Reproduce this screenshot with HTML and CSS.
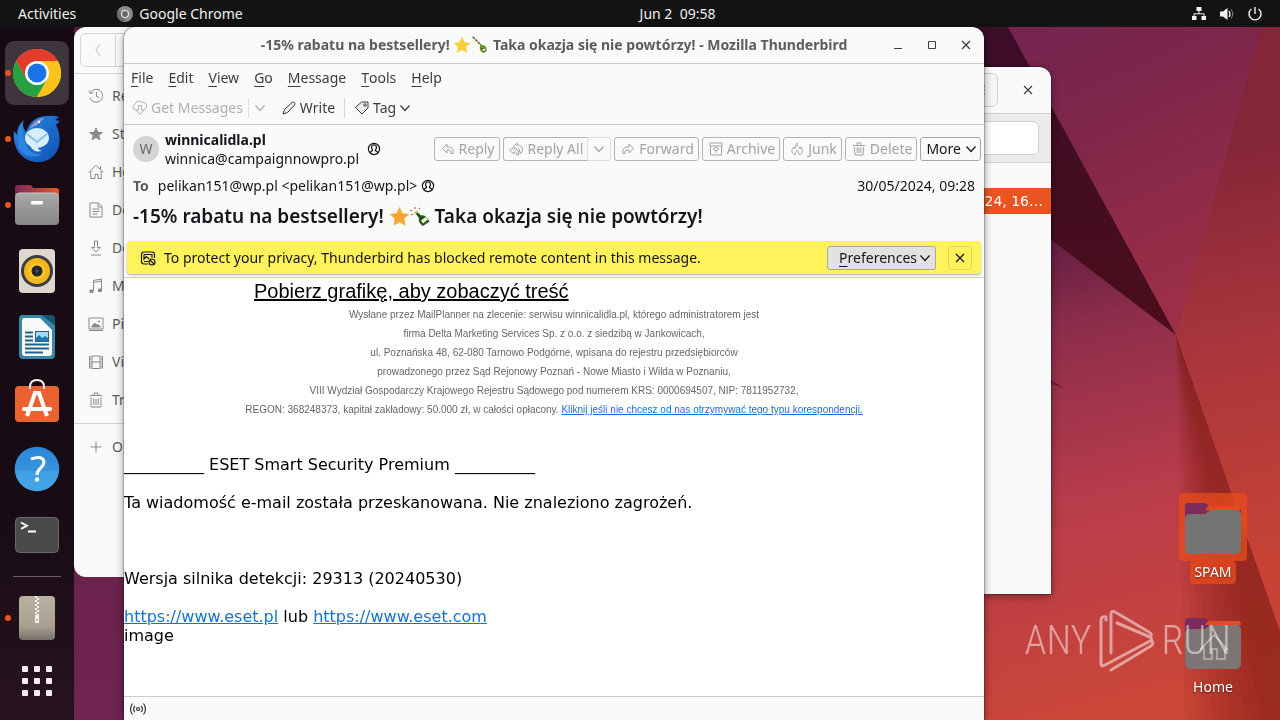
FILE: index.html
```html
<!DOCTYPE html>
<html lang="en">
<head>
<meta charset="utf-8">
<title>Desktop</title>
<link rel="stylesheet" href="styles.css">
</head>
<body>
<svg width="0" height="0" class="defs" aria-hidden="true">
  <defs>
    <symbol id="chev" viewBox="0 0 12 12"><path d="M1.500 3.500 6 8.500l4.500-5" fill="none" stroke="currentColor" stroke-width="1.200"/></symbol>
    <symbol id="close" viewBox="0 0 12 12"><path d="M2 2l8 8M10 2l-8 8" fill="none" stroke="currentColor" stroke-width="1.200"/></symbol>
    <symbol id="contact" viewBox="0 0 14 14"><g fill="none" stroke="currentColor" stroke-width="1.200"><circle cx="7" cy="7" r="5.600"/><path d="M3.200 11c0-1.500 1-2 2.300-2.400V7.800C4 6.500 4 2.900 7 2.900s3 3.600 1.500 4.900v.8c1.300.4 2.300.9 2.300 2.400"/></g></symbol>
    <symbol id="star" viewBox="0 0 20 20"><path d="M10 .8l2.800 6.100 6.600.8-4.900 4.500 1.300 6.600L10 15.500l-5.800 3.300 1.300-6.600L.6 7.700l6.600-.8z" fill="currentColor"/></symbol>
    <symbol id="bottle" viewBox="0 0 20 20"><path d="M5 6l2-1.500 4 4c4-1 7 3 8.500 6L13 19c-3-2-5-5-4-8z" fill="#23561f"/><path d="M4 5.500l2.500-2 1.500 1.800-2.500 2z" fill="#d9b64c"/><path d="M11 13.500l5-3.800 2 2.800-5 4z" fill="#f2edc4"/><path d="M0 3l2 1M5 0v2M1 8l2-1M9 2l1-1" stroke="#967a42" stroke-width="1.200"/></symbol>
    <symbol id="bottle-old" viewBox="0 0 20 20"><path d="M2 1l9 9" stroke="#77702f" stroke-width="2" stroke-dasharray="3 1"/><path d="M10 8l2 2c5 0 6 4 5 7l-3 2c-3-1-5-4-4-7z" fill="#6c9c1c"/><path d="M13 13l4 3-3 2-3-4z" fill="#394f18"/><path d="M12 15l3-1 1 2-2 1z" fill="#f3f2cf"/></symbol>
    <linearGradient id="folderTab"><stop offset="0" stop-color="#7a2a5c"/><stop offset="1" stop-color="#e6552b"/></linearGradient>
    <linearGradient id="folderGrey" x2="0" y2="1"><stop offset="0" stop-color="#a9a9a7"/><stop offset="1" stop-color="#858583"/></linearGradient>
    <linearGradient id="blue" x2="0" y2="1"><stop offset="0" stop-color="#2787d7"/><stop offset=".54" stop-color="#3b93dc"/><stop offset=".55" stop-color="#3f9fe4"/><stop offset="1" stop-color="#45a6e6"/></linearGradient>
    <linearGradient id="bird" x2="1" y2="1"><stop offset="0" stop-color="#2a8be6"/><stop offset="1" stop-color="#1150b4"/></linearGradient>
    <linearGradient id="zip" x2="0" y2="1"><stop offset="0" stop-color="#b9b2a2"/><stop offset=".7" stop-color="#a89f8f"/><stop offset="1" stop-color="#75706a"/></linearGradient>
  </defs>
</svg>

<svg class="wallpaper" viewBox="0 0 1280 720" preserveAspectRatio="none" aria-hidden="true">
  <defs>
    <linearGradient id="w1" gradientUnits="userSpaceOnUse" x1="1000" y1="240" x2="1120" y2="720"><stop offset="0" stop-color="#5d1c40"/><stop offset=".2" stop-color="#8c2d4b"/><stop offset=".55" stop-color="#b83c4b"/><stop offset="1" stop-color="#cc4737"/></linearGradient>
    <linearGradient id="w2" x2="0" y2="1"><stop offset="0" stop-color="#3c0d28"/><stop offset="1" stop-color="#4b0e1b"/></linearGradient>
    <linearGradient id="w3" x2=".4" y2="1"><stop offset="0" stop-color="#732550"/><stop offset=".4" stop-color="#7f2649"/><stop offset="1" stop-color="#9c2f47"/></linearGradient>
    <linearGradient id="w4" gradientUnits="userSpaceOnUse" x1="1200" y1="150" x2="1290" y2="560"><stop offset="0" stop-color="#842638"/><stop offset=".45" stop-color="#a8353c"/><stop offset="1" stop-color="#c74335"/></linearGradient>
    <linearGradient id="w6" x2="0" y2="1"><stop offset="0" stop-color="#581b3e"/><stop offset="1" stop-color="#702450"/></linearGradient>
  </defs>
  <rect width="1280" height="720" fill="url(#w1)"/>
  <rect y="27" width="600" height="693" fill="url(#w6)"/>
  <g fill="#851d1a" fill-opacity=".09">
    <path d="M1176 335 1185 720H1311z"/><path d="M1176 335 1195 720H1311z"/><path d="M1176 335 1204 720H1311z"/><path d="M1176 335 1213 720H1311z"/><path d="M1176 335 1222 720H1311z"/><path d="M1176 335 1230 720H1311z"/><path d="M1176 335 1238 720H1311z"/><path d="M1176 335 1246 720H1311z"/><path d="M1176 335 1254 720H1311z"/><path d="M1176 335 1262 720H1311z"/><path d="M1176 335 1270 720H1311z"/>
  </g>
  <path d="M900 27h110l166 308-276-211z" fill="url(#w2)"/>
  <path d="M1008 27h255l-87 308z" fill="url(#w3)"/>
  <path d="M1263 27h17v604L1176 335z" fill="url(#w4)"/>
  <path d="M1051 380l13 8-13-4z" fill="#6f1d3c"/>
</svg>

<header class="topbar">
  <div class="top-left">
    <button class="top-btn">Activities</button>
    <button class="top-btn app">
      <svg width="16" height="16" viewBox="0 0 16 16"><circle cx="8" cy="8" r="8" fill="#8b8b8b"/><path d="M8 8 1 4a8 8 0 0 0 6 12z" fill="#6c6c6c"/><circle cx="8" cy="8" r="4" fill="#e8e8e8"/><circle cx="8" cy="8" r="2.900" fill="#666"/></svg>
      Google Chrome
    </button>
  </div>
  <button class="top-btn">Jun 2&nbsp; 09:58</button>
  <div class="top-right">
    <svg width="16" height="16" viewBox="0 0 16 16" fill="#f2f2f2"><path d="M5.500 1h5v4h-5zM1 10h4.500v4H1zM10.500 10H15v4h-4.500z"/><path d="M8 5v3M3 10V7.800h10V10" fill="none" stroke="#f2f2f2"/></svg>
    <svg width="16" height="16" viewBox="0 0 16 16"><path d="M1 5.500h3L8.500 2v12L4 10.500H1z" fill="#f2f2f2"/><path d="M10 5q2 3 0 6" fill="none" stroke="#f2f2f2" stroke-width="1.300"/><path d="M12 3.500q3.500 4.500 0 9" fill="none" stroke="#777" stroke-width="1.200"/></svg>
    <svg width="16" height="16" viewBox="0 0 16 16" fill="none" stroke="#f2f2f2" stroke-width="1.400"><path d="M4.500 3a6 6 0 1 0 7 0M8 1v7"/></svg>
  </div>
</header>

<div class="workspace">
  <nav class="dock" aria-label="Dock">
    <button class="dock-item running active" aria-label="Google Chrome">
      <svg width="48" height="48" viewBox="0 0 48 48"><circle cx="24" cy="24" r="24" fill="#fbbf16"/><path d="M24 24H44.800A24 24 0 0 0 3.200 12L13.600 30z" fill="#e33b2e"/><path d="M44.800 12A24 24 0 0 0 3.200 12L24 12z" fill="#e33b2e"/><path d="M3.200 12A24 24 0 0 0 24 48l10.400-18H24l-10.400 0z" fill="#25a144"/><path d="M24 48A24 24 0 0 0 44.800 12H24v12l10.400 6z" fill="#fcc31b"/><circle cx="24" cy="24" r="12" fill="#fff"/><circle cx="24" cy="24" r="9.500" fill="#1a73e8"/></svg>
    </button>
    <button class="dock-item running" aria-label="Thunderbird">
      <svg width="48" height="48" viewBox="0 0 48 48"><path d="M13 17C17 6 24 1 34 1q7-1 12 1l-4 3 5 1-4 4c9 17 1 37-18 37C10 47-1 34 1 16l3 4C4 13 7 8 11 5c-2 4-1 8 2 12z" fill="url(#bird)"/><path d="M10 8c-3 10 0 12 2 19 2 9 10 14 18 11-8 7-20 3-24-5-3-8 0-18 4-25z" fill="#2f86df"/><path d="M17 14c2-5 7-10 14-11l-5 5c-2 3-6 3-9 6z" fill="#a59bd4"/><ellipse cx="24" cy="23" rx="12" ry="10" fill="#d8eefa"/><path d="M14 19l10 8 10-8" fill="none" stroke="#8ebfe6" stroke-width="2"/><path d="M17 31c4 6 7 6 12 5-3-1-4-2-4-4z" fill="#d8eefa"/><circle cx="26" cy="7" r="1.200" fill="#fff"/></svg>
    </button>
    <button class="dock-item running" aria-label="Files">
      <svg width="48" height="48" viewBox="0 0 48 48"><path d="M2 7q0-3 3-3h12q2 0 3 3h23q3 0 3 3v12H2z" fill="url(#folderTab)"/><rect x="2" y="12" width="44" height="32" rx="4" fill="url(#folderGrey)"/><path d="M3 14q1-2 4-2h34q3 0 4 2" fill="none" stroke="#c7c7c5"/><rect x="18" y="20" width="12" height="3.500" rx="1" fill="#fff"/></svg>
    </button>
    <button class="dock-item" aria-label="Rhythmbox">
      <svg width="48" height="48" viewBox="0 0 48 48"><rect x="6" y="2" width="36" height="44" rx="4" fill="#ddd7cd"/><circle cx="24" cy="24" r="16" fill="#3c3d40"/><circle cx="24" cy="24" r="13" fill="#f4b71b"/><circle cx="24" cy="24" r="8" fill="#f9c92e"/><circle cx="24" cy="24" r="5.500" fill="#242526"/><circle cx="24" cy="24" r="1.800" fill="#424b4f"/></svg>
    </button>
    <button class="dock-item" aria-label="LibreOffice Writer">
      <svg width="48" height="48" viewBox="0 0 48 48"><path d="M9 2h20l13 10v30q0 4-4 4H10q-4 0-4-4V6q0-4 3-4z" fill="#3987a8"/><path d="M29 2h9q4 0 4 4v6z" fill="#1b5270"/><path d="M11 5h16l12 12v23q0 3-3 3H12q-3 0-3-3V8q0-3 2-3z" fill="#f8fafa"/><path d="M12 19.500h8M12 23.500h8M12 27.500h8M12 31.500h24M12 35.500h24M12 39.500h18" stroke="#246283" stroke-width="2"/><rect x="22.500" y="18.500" width="13" height="10" fill="#a8daf6" stroke="#246283"/><path d="M23 28v-3l3-3 3 3 3-2 3 2v3z" fill="#1c79b1"/></svg>
    </button>
    <button class="dock-item" aria-label="Ubuntu Software">
      <svg width="48" height="48" viewBox="0 0 48 48"><rect x="2" y="7" width="44" height="36" rx="4" fill="#ea6132"/><path d="M17 10V8q0-7 7-7t7 7v2" fill="none" stroke="#f4eee6" stroke-width="2"/><path d="M14 37 22 14h4l8 23" fill="none" stroke="#fff" stroke-width="4"/><path d="M11 30h26" stroke="#fff" stroke-width="4" stroke-linecap="round"/></svg>
    </button>
    <button class="dock-item" aria-label="Help">
      <svg width="48" height="48" viewBox="0 0 48 48"><circle cx="24" cy="24" r="22.300" fill="url(#blue)"/><path d="M18 14q12-4 13 3c0 6-7 6-7 13" fill="none" stroke="#fff" stroke-width="3"/><circle cx="24" cy="34.500" r="2.200" fill="#fff"/></svg>
    </button>
    <button class="dock-item" aria-label="Terminal">
      <svg width="48" height="48" viewBox="0 0 48 48"><rect x="2.500" y="6.500" width="43" height="35" rx="4" fill="#4a4a4a" stroke="#686868"/><path d="M8 11.500l6 3.200-6 3.200M15 20.500h8" fill="none" stroke="#fff" stroke-width="1.800"/></svg>
    </button>
    <hr class="dock-sep">
    <button class="dock-item running" aria-label="Archive Manager">
      <svg width="48" height="48" viewBox="0 0 48 48"><rect x="6" y="2" width="36" height="44" rx="4" fill="url(#zip)"/><path d="M23 2v20" stroke="#f6f2ea" stroke-width="2" stroke-dasharray="2 2"/><path d="M25 4v18" stroke="#f6f2ea" stroke-width="2" stroke-dasharray="2 2"/><path d="M22 21h4v8h-4z" fill="#f4f1ec"/><path d="M23.500 25h1v2h-1z" fill="#777"/></svg>
    </button>
    <button class="dock-item apps" aria-label="Show Applications">
      <svg width="32" height="32" viewBox="0 0 32 32" fill="#f7eef4"><rect x="1" y="1" width="6" height="6" rx="1"/><rect x="13" y="1" width="6" height="6" rx="1"/><rect x="25" y="1" width="6" height="6" rx="1"/><rect x="1" y="13" width="6" height="6" rx="1"/><rect x="13" y="13" width="6" height="6" rx="1"/><rect x="25" y="13" width="6" height="6" rx="1"/><rect x="1" y="25" width="6" height="6" rx="1"/><rect x="13" y="25" width="6" height="6" rx="1"/><rect x="25" y="25" width="6" height="6" rx="1"/></svg>
    </button>
  </nav>

  <main class="desktop">
    <div class="desk-icons">
      <div class="desk-icon selected">
        <div class="desk-pic"><svg width="64" height="64" viewBox="0 0 64 64"><path d="M4 11q0-3 3-3h16q3 0 5 4h29q3 0 3 3v12H4z" fill="#7d2b5b"/><path d="M27 11h30q3 0 3 4H24z" fill="#e34b28"/><path d="M4 24q0-5 5-5h15l5-4h26q5 0 5 5v33q0 6-6 6H10q-6 0-6-6z" fill="#747472"/></svg></div>
        <span>SPAM</span>
      </div>
      <div class="desk-icon">
        <div class="desk-pic"><svg width="64" height="64" viewBox="0 0 64 64"><path d="M4 11q0-3 3-3h16q3 0 5 4h29q3 0 3 3v12H4z" fill="#7d2b5b"/><path d="M27 11h30q3 0 3 4H24z" fill="#e34b28"/><path d="M4 24q0-5 5-5h15l5-4h26q5 0 5 5v33q0 6-6 6H10q-6 0-6-6z" fill="#7c7573"/><path d="M19 40l14-15 14 15M23 37v12h8V39h5v10h8V37" fill="none" stroke="#bcb6b3" stroke-width="1.500"/></svg></div>
        <span>Home</span>
      </div>
    </div>

    <section class="window files" aria-label="Files">
      <div class="files-head"><div class="nav-pair"><button class="back" aria-label="Back"><svg width="12" height="16" viewBox="0 0 12 16"><path d="M8 2 4 8l4 6" fill="none" stroke="#cfcfcf" stroke-width="1.300"/></svg></button><button class="forward" aria-label="Forward"></button></div></div>
      <ul class="places">
        <li><svg viewBox="0 0 16 16"><path d="M2.500 4.500A6.500 6.500 0 1 1 2 10M1 2.500l1.300 3 3-.8M8.500 4v4.500l2.500 1"/></svg>Re</li>
        <li><svg viewBox="0 0 16 16"><path fill="#888" d="M8 2l1.700 4.300 4.600.2-3.600 2.900 1.300 4.400L8 11.300l-4 2.500 1.300-4.400-3.600-2.900 4.600-.2z"/></svg>St</li>
        <li><svg viewBox="0 0 16 16"><path d="M.8 8.500 8 1.300l7.200 7.200M2.800 7v7.500H7v-4h3v4h3.200V7M12.500 2v3"/></svg>Ho</li>
        <li><svg viewBox="0 0 16 16"><path d="M2 1h8.500L14 4.500V15H2zM10 1v4h4M4.500 7h7M4.500 9.500h7M4.500 12h5"/></svg>Do</li>
        <li><svg viewBox="0 0 16 16"><path d="M6.500 1h3v6.500h3L8 12 3.500 7.500h3zM3 15h10"/></svg>Do</li>
        <li><svg viewBox="0 0 16 16"><path d="M5.500 12.500V2.500l8-1.500v10.500M5.500 4.500l8-1.500"/><path fill="#888" d="M2 12h3v2.500H2zM10.500 11h3v2.500h-3z"/></svg>M</li>
        <li><svg viewBox="0 0 16 16"><path d="M1 2h14v11H1zM1 14.500h14"/><path fill="#888" d="M3.500 11 6.500 7l2 2 1-1 3 3zM10.500 5h1v1h-1z"/></svg>Pi</li>
        <li><svg viewBox="0 0 16 16"><path d="M4 2h8v12.500H4zM4 8h8M1.500 2v12.500M14.500 2v12.500"/><path d="M2.800 2v13M13.200 2v13" stroke-dasharray="1.500 1"/></svg>Vi</li>
        <li><svg viewBox="0 0 16 16"><path d="M2 3.500h12M6 3V1h4v2M3 5.500V15h10V5.500M5.800 6.500V13M8 6.500V13M10.200 6.500V13"/></svg>Tr</li>
        <li class="other"><svg viewBox="0 0 16 16"><path d="M8 2.500v11M2.500 8h11"/></svg>O</li>
      </ul>
    </section>

    <section class="window archive" aria-label="Archive">
      <div class="arc-head">
        <button class="arc-menu" aria-label="Menu"><svg width="10" height="14" viewBox="0 0 10 14"><path d="M1 3h8M1 7h8M1 11h8" stroke="#777"/></svg></button>
        <button class="plain" aria-label="Close"><svg width="12" height="12"><use href="#close"/></svg></button>
      </div>
      <div class="arc-bar"><input type="text" aria-label="Location"></div>
      <div class="arc-row">24, 16…</div>
    </section>

    <section class="window mail" aria-label="Mozilla Thunderbird">
      <div class="titlebar">
        <h1>-15% rabatu na bestsellery! <svg class="emoji gold" width="18" height="18"><use href="#star"/></svg><svg class="emoji" width="18" height="18"><use href="#bottle-old"/></svg> Taka okazja się nie powtórzy! - Mozilla Thunderbird</h1>
        <div class="win-btns">
          <button class="plain" aria-label="Minimize"><svg width="12" height="12" viewBox="0 0 12 12"><path d="M2 9.500h8" stroke="currentColor"/></svg></button>
          <button class="plain" aria-label="Maximize"><svg width="12" height="12" viewBox="0 0 12 12"><path d="M2.500 2.500h7v7h-7z" fill="none" stroke="currentColor"/></svg></button>
          <button class="plain" aria-label="Close"><svg width="12" height="12"><use href="#close"/></svg></button>
        </div>
      </div>
      <div class="menubar">
        <button><u>F</u>ile</button><button><u>E</u>dit</button><button><u>V</u>iew</button><button><u>G</u>o</button><button><u>M</u>essage</button><button><u>T</u>ools</button><button><u>H</u>elp</button>
      </div>
      <div class="toolbar">
        <button class="get" disabled><svg width="16" height="16" viewBox="0 0 16 16"><path d="M4.500 10H4a3 3 0 0 1-1-5.800A4 4 0 0 1 10 2.500a3.500 3.500 0 0 1 4.500 3.500c0 2-1 3.500-3 4M6.500 5.500h3V10H12l-4 4.500L4 10h2.500z" fill="none" stroke="currentColor"/></svg>Get Messages</button>
        <button class="drop" disabled aria-label="Get messages options"><svg width="12" height="12"><use href="#chev"/></svg></button>
        <button class="write"><svg width="16" height="16" viewBox="0 0 16 16"><path d="M2 14l1.500-4.500 7.500-7q1.500-1 2.500 0t0 2.500l-7 7.500z" fill="#eee" stroke="currentColor"/></svg>Write</button>
        <button class="tag"><svg width="16" height="16" viewBox="0 0 16 16"><path d="M1.500 7.500l6-5.500h6.500v6l-6 6z" fill="#ececec" stroke="currentColor"/><circle cx="11" cy="5" r="1.200" fill="#fff" stroke="currentColor"/></svg>Tag<svg width="12" height="12"><use href="#chev"/></svg></button>
      </div>

      <div class="msg-head">
        <div class="from-row">
          <div class="avatar">W</div>
          <div class="from"><strong>winnicalidla.pl</strong><span>winnica@campaignnowpro.pl</span></div>
          <svg class="contact" width="14" height="14"><use href="#contact"/></svg>
          <div class="actions">
            <button disabled><svg width="14" height="14" viewBox="0 0 14 14"><path d="M6 2 1.500 6.500 6 11V8h2q2 0 2 3.500h2q1-6-4-6.500H6z" fill="none" stroke="currentColor"/></svg>Reply</button>
            <div class="split"><button disabled><svg width="16" height="16" viewBox="0 0 16 16"><path d="M6 6 1.500 9.500 6 13V11h1.500q1.500 0 1.500 3h1.500q1-5-3-6H6zM9 2 5.500 5.500M9 2v2h1.500q4 .5 4 4.500 0 2-1 3.500H12q0-4-2-5" fill="none" stroke="currentColor"/></svg>Reply All</button><button disabled aria-label="Reply options"><svg width="12" height="12"><use href="#chev"/></svg></button></div>
            <button disabled><svg width="14" height="14" viewBox="0 0 14 14"><path d="M8 2l4.500 4.500L8 11V8H6q-2 0-2 3.500H2Q1 5.500 6 5h2z" fill="none" stroke="currentColor"/></svg>Forward</button>
            <button disabled><svg width="14" height="14" viewBox="0 0 14 14"><path d="M1 1h12v3H1zM1.500 4v9h11V4M4 7l3-2 3 2-3 2zM7 9v2" fill="none" stroke="currentColor"/></svg>Archive</button>
            <button disabled><svg width="14" height="14" viewBox="0 0 14 14"><path d="M5 13C0 10 2 6 4 5l.5 2L7 1c0 4 3 4 3 6l1-2c2 3 2 6-1 8-2-1-1-3-2.500-5C5 10 6 11 5 13z" fill="none" stroke="currentColor"/></svg>Junk</button>
            <button disabled><svg width="14" height="14" viewBox="0 0 14 14"><path d="M1 3.500h12M5 3V1h4v2M2.500 5l.5 8h8l.5-8M5.200 5.500V11M7 5.500V11M8.800 5.500V11" fill="none" stroke="currentColor"/></svg>Delete</button>
            <button class="more">More<svg width="12" height="12"><use href="#chev"/></svg></button>
          </div>
        </div>
        <div class="to-row"><b>To</b><span>pelikan151@wp.pl &lt;pelikan151@wp.pl&gt;</span><svg width="14" height="14"><use href="#contact"/></svg><time>30/05/2024, 09:28</time></div>
        <h2>-15% rabatu na bestsellery! <svg class="emoji orange" width="21" height="21"><use href="#star"/></svg><svg class="emoji" width="20" height="20"><use href="#bottle"/></svg> Taka okazja się nie powtórzy!</h2>
        <div class="notice">
          <svg width="16" height="16" viewBox="0 0 16 16" fill="none" stroke="#15141a" stroke-width="1.200"><path d="M8 14H4q-2.500 0-2.500-2.500v-7Q1.500 2 4 2h8q2.500 0 2.500 2.500V8M4 11.500H8M4 4.500h8v3M4 4.500V9l2.500-2.500L9 9"/><circle cx="12" cy="12" r="3"/><path d="M10 10l4 4"/></svg>
          <span>To protect your privacy, Thunderbird has blocked remote content in this message.</span>
          <button class="prefs"><span><u>P</u>references</span><svg width="12" height="12"><use href="#chev"/></svg></button>
          <button class="dismiss" aria-label="Close"><svg width="12" height="12"><use href="#close"/></svg></button>
        </div>
      </div>

      <article class="body">
        <div class="promo"><a href="#">Pobierz grafikę, aby zobaczyć treść</a></div>
        <p class="legal">Wysłane przez MailPlanner na zlecenie: serwisu winnicalidla.pl, którego administratorem jest<br>firma Delta Marketing Services Sp. z o.o. z siedzibą w Jankowicach,<br>ul. Poznańska 48, 62-080 Tarnowo Podgórne, wpisana do rejestru przedsiębiorców<br>prowadzonego przez Sąd Rejonowy Poznań - Nowe Miasto i Wilda w Poznaniu,<br>VIII Wydział Gospodarczy Krajowego Rejestru Sądowego pod numerem KRS: 0000694507, NIP: 7811952732,<br>REGON: 368248373, kapitał zakładowy: 50.000 zł, w całości opłacony. <a href="#">Kliknij jeśli nie chcesz od nas otrzymywać tego typu korespondencji.</a></p>
        <div class="scan">__________ ESET Smart Security Premium __________<br><br>Ta wiadomość e-mail została przeskanowana. Nie znaleziono zagrożeń.<br><br><br><br>Wersja silnika detekcji: 29313 (20240530)<br><br><a href="#">https://www.eset.pl</a> lub <a href="#">https://www.eset.com</a><br>image</div>
      </article>
      <footer class="status"><svg width="18" height="14" viewBox="0 0 18 14" fill="none" stroke="#333" stroke-width="1.200"><circle cx="9" cy="7" r="1.500"/><path d="M5.800 3.800q-2.300 3.200 0 6.400M12.200 3.800q2.300 3.200 0 6.400M3.500 1.500q-4 5.500 0 11M14.500 1.500q4 5.500 0 11"/></svg></footer>
    </section>

    <div class="watermark">
      <span>ANY</span>
      <svg width="56" height="62" viewBox="0 0 56 62" fill="none" stroke="currentColor" stroke-width="3" stroke-linejoin="round" stroke-linecap="round"><path d="M7 10V7q-5-1-5 3v44q0 3 4 1l45-24q3-2 0-4L18 13M12 43V4q0-4 4-2l34 20q4 2 1 5M12 60l40-24q3-2 1-5"/></svg>
      <span>RUN</span>
    </div>
  </main>
</div>
</body>
</html>
```

FILE: styles.css
```css
* { box-sizing: border-box; }
html, body { height: 100%; }
body {
  margin: 0;
  display: flex;
  flex-direction: column;
  overflow: hidden;
  font-family: "Noto Sans", "Open Sans", sans-serif;
  font-size: 14px;
  line-height: 20px;
  color: #3d3d3d;
}
button { font: inherit; color: inherit; background: none; border: 0; padding: 0; display: inline-flex; align-items: center; white-space: nowrap; }
svg { flex: none; display: block; }
a { color: #1373d0; }
u { text-underline-offset: 3px; }
.defs { position: absolute; }
.wallpaper { position: fixed; inset: 0; width: 100%; height: 100%; z-index: -1; }

.topbar {
  flex: none;
  height: 27px;
  display: grid;
  grid-template-columns: 1fr auto 1fr;
  align-items: center;
  background: #131313;
  color: #f0f0f0;
  padding: 0 17px 0 92px;
}
.top-left { display: flex; gap: 41px; margin-left: -74px; }
.top-btn { gap: 6px; }
.top-right { display: flex; gap: 12px; justify-content: flex-end; }

.workspace { flex: 1; display: flex; min-height: 0; }
.dock {
  flex: none;
  width: 74px;
  padding-top: 13px;
  display: flex;
  flex-direction: column;
  background: linear-gradient(#180a12, #180c14 70%, #27131f);
}
.dock-item { height: 66px; width: 64px; margin-left: 5px; flex: none; justify-content: center; position: relative; border-radius: 9px; }
.dock-item.active { background: #3f353c; height: 64px; margin-top: 1px; margin-bottom: 1px; }
.dock-item.running::before { content: ""; position: absolute; left: 0; top: 50%; width: 6px; height: 6px; margin-top: -3px; border-radius: 50%; background: #e95420; }
.dock-item.apps { height: 60px; }
.dock-sep { width: 48px; height: 1px; margin: 8px auto; border: 0; background: #685f65; flex: none; }

.desktop { flex: 1; position: relative; min-width: 0; }
.window { position: absolute; background: #fafafa; border-radius: 12px 12px 0 0; overflow: hidden; box-shadow: 0 2px 8px rgba(0,0,0,.45), 0 0 0 1px rgba(0,0,0,.2); }
.plain { justify-content: center; color: #3d3d3d; }

.files { inset: 0 300px 143px 0; border-radius: 12px; box-shadow: none; }
.files-head { height: 47px; padding: 6px; border-bottom: 1px solid #d5d5d5; }
.nav-pair { display: flex; width: 70px; height: 34px; border: 1px solid #d4d4d4; border-radius: 6px; }
.back, .forward { flex: 1; justify-content: center; }
.forward { border-left: 1px solid #d4d4d4; }
.places { list-style: none; margin: 0; padding: 3px 0 0; color: #5c5c5c; }
.places li { height: 38px; display: flex; align-items: center; gap: 8px; padding-left: 14px; }
.places svg { width: 16px; height: 16px; fill: none; stroke: #888; }
.places .other { border-top: 1px solid #d5d5d5; margin-top: 4px; height: 47px; }

.archive { inset: 40px 229px 126px 500px; border-radius: 12px 12px 0 0; }
.arc-head { height: 47px; display: flex; align-items: center; justify-content: flex-end; gap: 24px; padding-right: 17px; border-bottom: 1px solid #d0d0d0; }
.arc-menu { width: 34px; height: 34px; justify-content: center; border: 1px solid #cfcfcf; border-radius: 6px; background: #f6f6f6; }
.arc-bar { height: 49px; padding: 7px 12px; background: #ebebeb; border-bottom: 1px solid #d6d6d6; }
.arc-bar input { width: 100%; height: 34px; border: 1px solid #d0d0d0; border-radius: 6px; background: #fff; }
.arc-row { margin-top: 25px; height: 26px; line-height: 26px; padding-right: 8px; text-align: right; background: #e95420; color: #fff; font-family: "DejaVu Sans", sans-serif; }

.mail { inset: 0 296px 0 50px; display: flex; flex-direction: column; }
.titlebar { flex: none; height: 37px; position: relative; display: flex; align-items: center; justify-content: center; border-bottom: 1px solid #ccc; }
.titlebar h1 { margin: 0; font-size: 14px; line-height: 20px; font-weight: 700; color: #5c5c5c; }
.emoji { display: inline-block; vertical-align: -4px; }
.gold { color: #f7ce3c; }
.orange { color: #fba530; }
.win-btns { position: absolute; right: 12px; display: flex; gap: 22px; }
.menubar { flex: none; height: 28px; display: flex; align-items: center; gap: 15px; padding: 0 7px; }
.toolbar { flex: none; height: 33px; display: flex; align-items: center; padding: 0 8px 1px; border-bottom: 1px solid #ccc; }
.toolbar button { gap: 3px; height: 20px; }
.toolbar button:disabled { color: #b0b0b0; }
.toolbar .drop { border-left: 1px solid #e0e0e0; padding: 0 6px 0 5px; margin-left: 5px; }
.toolbar .write { margin-left: 9px; padding-right: 9px; border-right: 1px solid #d5d5d5; }
.toolbar .tag { margin-left: 9px; }

.msg-head { flex: none; padding: 5px 3px 3px; color: #15141a; border-bottom: 1px solid #ccc; }
.from-row { display: flex; align-items: center; padding-left: 6px; height: 38px; }
.avatar { width: 26px; height: 26px; border-radius: 50%; background: #d4d4d6; color: #68686c; display: grid; place-items: center; }
.from { display: flex; flex-direction: column; line-height: 19px; margin-left: 6px; }
.contact { margin-left: 8px; }
.actions { margin-left: auto; display: flex; gap: 3px; }
.actions button { height: 24px; gap: 4px; padding: 0 4px 0 6px; border: 1px solid #8f8f9d; border-radius: 3px; }
.actions button:disabled { color: #a3a3a8; border-color: #b4b4b8; }
.split { display: flex; }
.actions .split button:first-child { border-radius: 3px 0 0 3px; border-right-color: #ddd; padding-left: 4px; }
.actions .split button:last-child { border-radius: 0 3px 3px 0; border-color: #ddd; border-left: 0; padding: 0 5px; }
.actions .more { padding: 0 3px 0 5px; border-color: #a6a6ad; }
.to-row { display: flex; align-items: center; gap: 4px; height: 35px; padding: 0 6px; }
.to-row b { color: #5b5b66; margin-right: 5px; }
.to-row time { margin-left: auto; }
.msg-head h2 { margin: 0 0 12px; padding: 0 6px; font-size: 19px; line-height: 26px; font-weight: 600; }
.notice { display: flex; align-items: center; height: 33px; padding: 0 9px 0 13px; border-radius: 4px; background: #fff35c; box-shadow: 0 1px 2px rgba(0,0,0,.3); }
.notice > span { margin-left: 8px; }
.prefs { margin-left: auto; height: 24px; padding: 0 4px 0 11px; gap: 2px; border: 1px solid #aaa99a; border-radius: 3px; background: #e2e2e2; }
.dismiss { width: 24px; height: 24px; margin-left: 12px; justify-content: center; border: 1px solid #e3d64e; border-radius: 3px; }

.body { flex: 1; min-height: 0; overflow: hidden; background: #fff; color: #000; }
.promo { max-width: 600px; margin: 0 auto; font: 20px/26px "Liberation Sans", sans-serif; }
.promo a { color: #000; }
.legal { margin: 0; padding-top: 1px; text-align: center; font: 10px/19px "Liberation Sans", sans-serif; color: #666; }
.scan { margin-top: 36px; font: 16px/19px "DejaVu Sans", sans-serif; }
.status { flex: none; height: 24px; display: flex; align-items: center; padding-left: 5px; border-top: 1px solid #ccc; }

.desk-icons { position: absolute; right: 33px; bottom: 21px; display: flex; flex-direction: column; gap: 24px; align-items: center; color: #fff; }
.desk-icon { display: flex; flex-direction: column; align-items: center; text-shadow: 0 1px 2px rgba(0,0,0,.6); }
.desk-pic { padding: 2px; border-radius: 4px; }
.desk-icon span { padding: 1px 4px 2px; border-radius: 4px; }
.selected .desk-pic, .selected span { background: rgba(233,75,26,.75); }
.watermark { position: absolute; right: 49px; bottom: 48px; display: flex; align-items: center; gap: 7px; color: rgba(255,255,255,.5); font: 300 40px/62px "Liberation Sans Narrow", "Roboto Condensed", "Roboto", sans-serif; }
```
